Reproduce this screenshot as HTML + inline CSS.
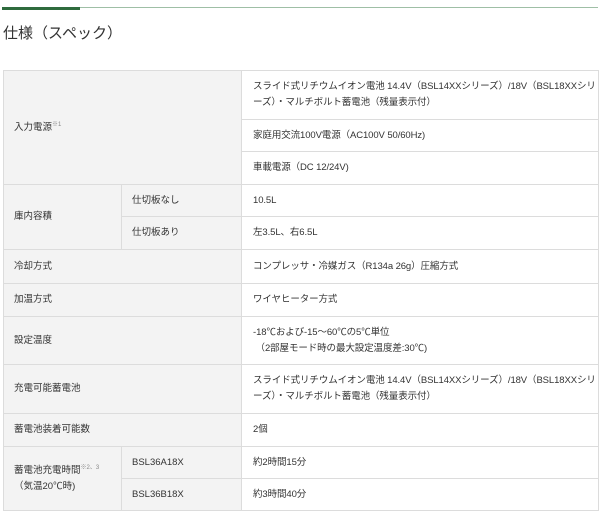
<!DOCTYPE html>
<html><head><meta charset="utf-8"><style>
body{margin:0;background:#fff;width:600px;height:509px;overflow:hidden;font-family:"Liberation Sans","Noto Sans CJK JP",sans-serif;color:#333}
.bar{position:absolute;top:7px;left:2px;width:596px;height:1px;background:#9fbfa6}
.bar2{position:absolute;top:7px;left:2px;width:78px;height:3px;background:#2e6b3d}
h2{position:absolute;top:22px;left:3px;margin:0;font-size:15px;font-weight:normal;color:#333}
table{position:absolute;top:70px;left:3px;width:596px;border-collapse:collapse;table-layout:fixed;font-size:9.5px;line-height:16px}
td{border:1px solid #dcdcdc;padding:0 0 0 10px;vertical-align:middle}
td.l{background:#f3f3f3}
td.v{padding-left:11px;padding-right:0;white-space:nowrap;overflow:hidden;letter-spacing:-0.1px}
sup{font-size:6px;color:#888;vertical-align:top;position:relative;top:-3px}
</style></head><body>
<div class="bar"></div><div class="bar2"></div>
<h2>仕様（スペック）</h2>
<table>
<colgroup><col style="width:118px"><col style="width:120px"><col></colgroup>
<tr style="height:49px"><td class="l" colspan="2" rowspan="3">入力電源<sup>※1</sup></td><td class="v">スライド式リチウムイオン電池 14.4V（BSL14XXシリーズ）/18V（BSL18XXシリ<br>ーズ）・マルチボルト蓄電池（残量表示付）</td></tr>
<tr style="height:32px"><td class="v">家庭用交流100V電源（AC100V 50/60Hz)</td></tr>
<tr style="height:33px"><td class="v">車載電源（DC 12/24V)</td></tr>
<tr style="height:32px"><td class="l" rowspan="2">庫内容積</td><td class="l">仕切板なし</td><td class="v">10.5L</td></tr>
<tr style="height:33px"><td class="l">仕切板あり</td><td class="v">左3.5L、右6.5L</td></tr>
<tr style="height:34px"><td class="l" colspan="2">冷却方式</td><td class="v">コンプレッサ・冷媒ガス（R134a 26g）圧縮方式</td></tr>
<tr style="height:33px"><td class="l" colspan="2">加温方式</td><td class="v">ワイヤヒーター方式</td></tr>
<tr style="height:48px"><td class="l" colspan="2">設定温度</td><td class="v">-18℃および-15～60℃の5℃単位<br>&nbsp;（2部屋モード時の最大設定温度差:30℃)</td></tr>
<tr style="height:49px"><td class="l" colspan="2">充電可能蓄電池</td><td class="v">スライド式リチウムイオン電池 14.4V（BSL14XXシリーズ）/18V（BSL18XXシリ<br>ーズ）・マルチボルト蓄電池（残量表示付）</td></tr>
<tr style="height:33px"><td class="l" colspan="2">蓄電池装着可能数</td><td class="v">2個</td></tr>
<tr style="height:32px"><td class="l" rowspan="2">蓄電池充電時間<sup>※2、3</sup><br>（気温20℃時)</td><td class="l">BSL36A18X</td><td class="v">約2時間15分</td></tr>
<tr style="height:32px"><td class="l">BSL36B18X</td><td class="v">約3時間40分</td></tr>
</table>
</body></html>
